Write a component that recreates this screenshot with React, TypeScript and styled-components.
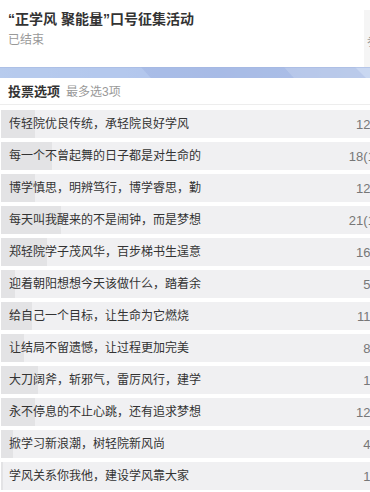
import React from "react";
import styled, { createGlobalStyle } from "styled-components";

const GlobalStyle = createGlobalStyle`
  html, body {
    margin: 0;
    padding: 0;
    overflow: hidden;
    background: #ffffff;
  }
  body {
    font-family: "Liberation Sans", "Noto Sans CJK SC", sans-serif;
  }
`;

const Page = styled.div`
  width: 400px;
  background: #ffffff;
`;

const Header = styled.div`
  display: flex;
  align-items: stretch;
  height: 67px;
`;

const Info = styled.div`
  width: 364px;
  flex: none;
  padding: 9px 0 0 8px;
  box-sizing: border-box;
`;

const Title = styled.div`
  font-size: 14px;
  line-height: 20px;
  font-weight: bold;
  color: #333333;
  white-space: nowrap;
`;

const Status = styled.div`
  margin-top: 2px;
  font-size: 12px;
  line-height: 18px;
  color: #999999;
`;

const StatsPanel = styled.div`
  flex: 1;
  margin-top: 10px;
  background: #f5f5f5;
  padding: 23px 0 0 3px;
  font-size: 12px;
  line-height: 18px;
  color: #999999;
  white-space: nowrap;
  overflow: hidden;
`;

const Banner = styled.div`
  height: 11px;
  background: linear-gradient(to right, #b6caec 0%, #adc1ea 35%, #a9bce7 55%, #b3c5e9 75%, #c4d3ef 100%);
  overflow: hidden;
  svg {
    display: block;
  }
`;

const SectionHeader = styled.div`
  display: flex;
  align-items: center;
  gap: 6px;
  height: 20px;
  padding: 2px 0 4px 8px;
  border-bottom: 1px solid #ededed;
`;

const SectionTitle = styled.span`
  font-size: 13px;
  font-weight: bold;
  color: #333333;
`;

const SectionHint = styled.span`
  font-size: 12px;
  color: #999999;
`;

const OptionList = styled.div`
  display: flex;
  flex-direction: column;
  gap: 4px;
  padding: 5px 0 0 1px;
`;

const OptionRow = styled.div<{ $fill: number }>`
  display: flex;
  align-items: center;
  justify-content: space-between;
  height: 28px;
  padding: 0 2px 0 8px;
  background: linear-gradient(
    to right,
    #e3e3e5 0px,
    #e3e3e5 ${(p) => p.$fill}px,
    #f0f0f2 ${(p) => p.$fill}px,
    #f0f0f2 100%
  );
`;

const OptionLabel = styled.span`
  max-width: 192px;
  overflow: hidden;
  white-space: nowrap;
  font-size: 12px;
  line-height: 28px;
  color: #333333;
`;

const OptionCount = styled.span`
  font-family: "Liberation Sans", Arial, sans-serif;
  font-size: 13px;
  color: #777777;
  white-space: nowrap;
`;

const options = [
  { label: "传轻院优良传统，承轻院良好学风", count: "12(9%)", fill: 34 },
  { label: "每一个不曾起舞的日子都是对生命的辜负", count: "18(13%)", fill: 51 },
  { label: "博学慎思，明辨笃行，博学睿思，勤学善行", count: "12(9%)", fill: 34 },
  { label: "每天叫我醒来的不是闹钟，而是梦想", count: "21(15%)", fill: 60 },
  { label: "郑轻院学子茂风华，百步梯书生逞意气", count: "16(9%)", fill: 46 },
  { label: "迎着朝阳想想今天该做什么，踏着余晖", count: "5(4%)", fill: 14 },
  { label: "给自己一个目标，让生命为它燃烧", count: "11(8%)", fill: 31 },
  { label: "让结局不留遗憾，让过程更加完美", count: "8(6%)", fill: 23 },
  { label: "大刀阔斧，斩邪气，雷厉风行，建学风", count: "1(9%)", fill: 37 },
  { label: "永不停息的不止心跳，还有追求梦想", count: "12(9%)", fill: 34 },
  { label: "掀学习新浪潮，树轻院新风尚", count: "4(3%)", fill: 12 },
  { label: "学风关系你我他，建设学风靠大家", count: "1(1%)", fill: 2 },
];

function BannerArt() {
  return (
    <svg width="400" height="11" viewBox="0 0 400 11">
      <polygon points="0,0 141,0 151,11 0,11" fill="#b8ccee" opacity="0.6" />
      <polygon points="141,0 284,0 294,11 151,11" fill="#a7bae6" opacity="0.7" />
      <polygon points="284,0 355,0 366,11 294,11" fill="#b9c9ea" opacity="0.7" />
      <polygon points="355,0 400,0 400,11 366,11" fill="#ccd9f1" opacity="0.8" />
      <rect x="0" y="0" width="400" height="1" fill="#a3b6e0" opacity="0.5" />
    </svg>
  );
}

export default function App() {
  return (
    <>
      <GlobalStyle />
      <Page>
        <Header>
          <Info>
            <Title>“正学风 聚能量”口号征集活动</Title>
            <Status>已结束</Status>
          </Info>
          <StatsPanel>参与人数</StatsPanel>
        </Header>
        <Banner>
          <BannerArt />
        </Banner>
        <SectionHeader>
          <SectionTitle>投票选项</SectionTitle>
          <SectionHint>最多选3项</SectionHint>
        </SectionHeader>
        <OptionList>
          {options.map((o) => (
            <OptionRow key={o.label} $fill={o.fill}>
              <OptionLabel>{o.label}</OptionLabel>
              <OptionCount>{o.count}</OptionCount>
            </OptionRow>
          ))}
        </OptionList>
      </Page>
    </>
  );
}
